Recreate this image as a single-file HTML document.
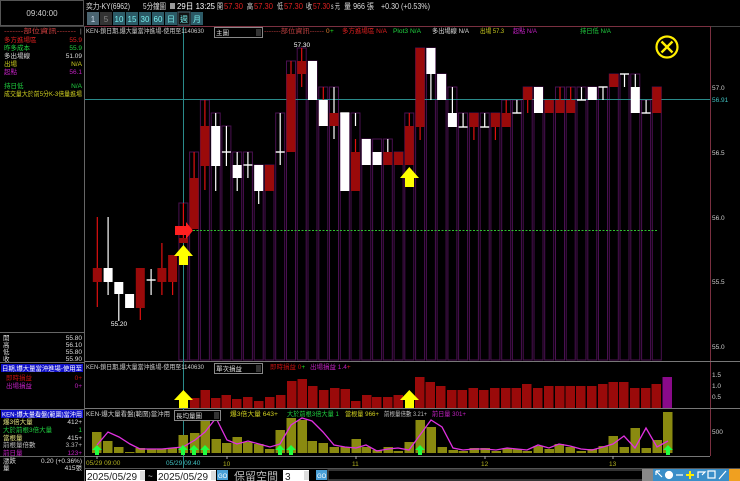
<!DOCTYPE html>
<html><head><meta charset="utf-8"><style>
html,body{margin:0;padding:0;background:#000;width:740px;height:481px;overflow:hidden}
svg{display:block}
text{font-family:"Liberation Sans","Noto Sans CJK TC",sans-serif}
.s{font-size:6.5px}
.m{font-size:8px}
</style></head><body>
<svg width="740" height="481" viewBox="0 0 740 481" xmlns="http://www.w3.org/2000/svg">
<rect width="740" height="481" fill="#000"/>
<rect x="0.5" y="0.5" width="83" height="25" fill="#000" stroke="#555"/>
<text x="42" y="16" class="m" fill="#ccc" text-anchor="middle">09:40:00</text>
<g class="m" lengthAdjust="spacingAndGlyphs">
<text x="86" y="9" fill="#ddd" textLength="44" lengthAdjust="spacingAndGlyphs">奕力-KY(6962)</text>
<text x="143" y="9" fill="#ddd" textLength="23" lengthAdjust="spacingAndGlyphs">5分鐘圖</text>
<rect x="170" y="3" width="5" height="6" fill="#999"/>
<text x="177" y="9" fill="#fff" textLength="38" lengthAdjust="spacingAndGlyphs">29日 13:25</text>
<text x="217" y="9" fill="#ddd" textLength="6" lengthAdjust="spacingAndGlyphs">開</text><text x="224" y="9" fill="#e02020" textLength="19" lengthAdjust="spacingAndGlyphs">57.30</text>
<text x="247" y="9" fill="#ddd" textLength="6" lengthAdjust="spacingAndGlyphs">高</text><text x="254" y="9" fill="#e02020" textLength="19" lengthAdjust="spacingAndGlyphs">57.30</text>
<text x="277" y="9" fill="#ddd" textLength="6" lengthAdjust="spacingAndGlyphs">低</text><text x="284" y="9" fill="#e02020" textLength="19" lengthAdjust="spacingAndGlyphs">57.30</text>
<text x="306" y="9" fill="#ddd" textLength="6" lengthAdjust="spacingAndGlyphs">收</text><text x="313" y="9" fill="#e02020" textLength="17" lengthAdjust="spacingAndGlyphs">57.30</text>
<text x="331" y="9" fill="#ddd" textLength="9" lengthAdjust="spacingAndGlyphs">s 元</text>
<text x="344" y="9" fill="#ddd" textLength="30" lengthAdjust="spacingAndGlyphs">量 966 張</text>
<text x="381" y="9" fill="#ddd" textLength="49" lengthAdjust="spacingAndGlyphs">+0.30 (+0.53%)</text>
</g>
<g class="m" text-anchor="middle">
<rect x="87" y="12" width="12" height="13" fill="#4a6470"/><text x="93" y="22" fill="#cde">1</text>
<rect x="100" y="12" width="12" height="13" fill="#333"/><text x="106" y="22" fill="#888">5</text>
<rect x="113" y="12" width="12" height="13" fill="#2c5a66"/><text x="119" y="22" fill="#7ee">10</text>
<rect x="126" y="12" width="12" height="13" fill="#2c5a66"/><text x="132" y="22" fill="#7ee">15</text>
<rect x="139" y="12" width="12" height="13" fill="#2c5a66"/><text x="145" y="22" fill="#7ee">30</text>
<rect x="152" y="12" width="12" height="13" fill="#2c5a66"/><text x="158" y="22" fill="#7ee">60</text>
<rect x="165" y="12" width="12" height="13" fill="#2c5a66"/><text x="171" y="22" fill="#7ee">日</text>
<rect x="178" y="12" width="12" height="13" fill="#111" stroke="#4a6470"/><text x="184" y="22" fill="#7ee">週</text>
<rect x="191" y="12" width="12" height="13" fill="#2c5a66"/><text x="197" y="22" fill="#7ee">月</text>
</g>
<line x1="84.5" y1="26" x2="84.5" y2="481" stroke="#666"/>
<line x1="0" y1="26.5" x2="740" y2="26.5" stroke="#444"/>
<g class="s">
<text x="4" y="33" fill="#d04040" textLength="72" lengthAdjust="spacingAndGlyphs">-------部位資訊-------</text><text x="80" y="33" fill="#aaa">|</text>
<text x="4" y="42" fill="#e02020">多方進場區</text><text x="82" y="42" fill="#e02020" text-anchor="end">55.9</text>
<text x="4" y="50" fill="#20d040">昨多成本</text><text x="82" y="50" fill="#20d040" text-anchor="end">55.9</text>
<text x="4" y="58" fill="#ddd">多出場線</text><text x="82" y="58" fill="#ddd" text-anchor="end">51.09</text>
<text x="4" y="66" fill="#d0d020">出場</text><text x="82" y="66" fill="#d0d020" text-anchor="end">N/A</text>
<text x="4" y="74" fill="#c020c0">起點</text><text x="82" y="74" fill="#c020c0" text-anchor="end">56.1</text>
<text x="4" y="88" fill="#20d040">持日低</text><text x="82" y="88" fill="#20d040" text-anchor="end">N/A</text>
<text x="4" y="96" fill="#d0d020" textLength="78" lengthAdjust="spacingAndGlyphs">成交量大於前5分K-3倍量進場</text>
</g>
<line x1="0" y1="332.5" x2="84" y2="332.5" stroke="#666"/>
<g class="s" fill="#ddd">
<text x="3" y="340">開</text><text x="82" y="340" text-anchor="end">55.80</text>
<text x="3" y="347">高</text><text x="82" y="347" text-anchor="end">56.10</text>
<text x="3" y="354">低</text><text x="82" y="354" text-anchor="end">55.80</text>
<text x="3" y="361">收</text><text x="82" y="361" text-anchor="end">55.90</text>
</g>
<line x1="0" y1="362.5" x2="84" y2="362.5" stroke="#666"/>
<rect x="1" y="364" width="82" height="8" fill="#1010c8"/>
<g class="s">
<text x="2" y="370.5" fill="#fff" textLength="80" lengthAdjust="spacingAndGlyphs">日期,爆大量當沖進場-使用至</text>
<text x="6" y="380" fill="#c01010">即時損益</text><text x="82" y="380" fill="#c01010" text-anchor="end">0+</text>
<text x="6" y="388" fill="#c020c0">出場損益</text><text x="82" y="388" fill="#c020c0" text-anchor="end">0+</text>
</g>
<line x1="0" y1="409.5" x2="84" y2="409.5" stroke="#666"/>
<rect x="1" y="410" width="82" height="8" fill="#1010c8"/>
<g class="s">
<text x="2" y="416.5" fill="#fff" textLength="80" lengthAdjust="spacingAndGlyphs">KEN-爆大量看盤(範圍)當沖用</text>
<text x="3" y="424" fill="#e0e080">爆3倍大量</text><text x="82" y="424" fill="#ddd" text-anchor="end">412+</text>
<text x="3" y="432" fill="#20d040">大於前根3倍大量</text><text x="82" y="432" fill="#20d040" text-anchor="end">1</text>
<text x="3" y="440" fill="#e0e080">當根量</text><text x="82" y="440" fill="#ddd" text-anchor="end">415+</text>
<text x="3" y="447" fill="#bbb">前根量倍數</text><text x="82" y="447" fill="#bbb" text-anchor="end">3.37+</text>
<text x="3" y="455" fill="#c020c0">前日量</text><text x="82" y="455" fill="#c020c0" text-anchor="end">123+</text>
</g>
<line x1="0" y1="456.5" x2="84" y2="456.5" stroke="#666"/>
<g class="s" fill="#ddd">
<text x="3" y="463">漲跌</text><text x="82" y="463" text-anchor="end">0.20 (+0.36%)</text>
<text x="3" y="470">量</text><text x="82" y="470" text-anchor="end">415張</text>
</g>

<line x1="85" y1="26.5" x2="710" y2="26.5" stroke="#7a3040"/>
<line x1="710.5" y1="26" x2="710.5" y2="456" stroke="#7a3040"/>
<line x1="85" y1="361.5" x2="740" y2="361.5" stroke="#777"/>
<line x1="85" y1="408.5" x2="740" y2="408.5" stroke="#777"/>
<line x1="85" y1="456.5" x2="710" y2="456.5" stroke="#777"/>

<g fill="none" stroke="#4a1050" stroke-width="1">
<rect x="178.9" y="203" width="9" height="157"/><rect x="189.6" y="152" width="9" height="208"/><rect x="200.4" y="100" width="9" height="260"/><rect x="211.2" y="113" width="9" height="247"/><rect x="221.9" y="126" width="9" height="234"/><rect x="232.7" y="152" width="9" height="208"/><rect x="243.4" y="152" width="9" height="208"/><rect x="254.2" y="165" width="9" height="195"/><rect x="265" y="165" width="9" height="195"/><rect x="275.7" y="113" width="9" height="247"/><rect x="286.5" y="61" width="9" height="299"/><rect x="297.2" y="48" width="9" height="312"/><rect x="308" y="61" width="9" height="299"/><rect x="318.8" y="87" width="9" height="273"/><rect x="329.5" y="87" width="9" height="273"/><rect x="340.3" y="113" width="9" height="247"/><rect x="351" y="113" width="9" height="247"/><rect x="361.8" y="139" width="9" height="221"/><rect x="372.6" y="139" width="9" height="221"/><rect x="383.3" y="139" width="9" height="221"/><rect x="394.1" y="152" width="9" height="208"/><rect x="404.8" y="113" width="9" height="247"/><rect x="415.6" y="48" width="9" height="312"/><rect x="426.4" y="48" width="9" height="312"/><rect x="437.1" y="74" width="9" height="286"/><rect x="447.9" y="87" width="9" height="273"/><rect x="458.6" y="113" width="9" height="247"/><rect x="469.4" y="113" width="9" height="247"/><rect x="480.2" y="113" width="9" height="247"/><rect x="490.9" y="113" width="9" height="247"/><rect x="501.7" y="100" width="9" height="260"/><rect x="512.4" y="100" width="9" height="260"/><rect x="523.2" y="87" width="9" height="273"/><rect x="534" y="87" width="9" height="273"/><rect x="544.7" y="100" width="9" height="260"/><rect x="555.5" y="87" width="9" height="273"/><rect x="566.2" y="87" width="9" height="273"/><rect x="577" y="87" width="9" height="273"/><rect x="587.8" y="87" width="9" height="273"/><rect x="598.5" y="87" width="9" height="273"/><rect x="609.3" y="74" width="9" height="286"/><rect x="620" y="74" width="9" height="286"/><rect x="630.8" y="74" width="9" height="286"/><rect x="641.6" y="100" width="9" height="260"/><rect x="652.3" y="87" width="9" height="273"/>
</g>

<line x1="85" y1="99.5" x2="710" y2="99.5" stroke="#2a8a8a"/>
<line x1="183.5" y1="27" x2="183.5" y2="468" stroke="#2a8a8a"/>
<line x1="193" y1="230.5" x2="657" y2="230.5" stroke="#30c030" stroke-dasharray="2,1.5"/>

<g stroke-width="1.2">
<g stroke="#e01010">
<line x1="97.3" y1="217" x2="97.3" y2="307"/><line x1="140.3" y1="268" x2="140.3" y2="320"/><line x1="161.9" y1="243" x2="161.9" y2="295"/><line x1="172.6" y1="255" x2="172.6" y2="295"/><line x1="183.4" y1="203" x2="183.4" y2="243"/><line x1="194.1" y1="152" x2="194.1" y2="229"/><line x1="204.9" y1="100" x2="204.9" y2="190"/><line x1="291" y1="61" x2="291" y2="152"/><line x1="301.7" y1="48" x2="301.7" y2="87"/><line x1="323.3" y1="87" x2="323.3" y2="126"/><line x1="355.5" y1="139" x2="355.5" y2="191"/><line x1="398.6" y1="152" x2="398.6" y2="165"/><line x1="409.3" y1="113" x2="409.3" y2="165"/><line x1="420.1" y1="48" x2="420.1" y2="140"/><line x1="473.9" y1="113" x2="473.9" y2="140"/><line x1="495.4" y1="113" x2="495.4" y2="140"/><line x1="506.2" y1="100" x2="506.2" y2="127"/><line x1="527.7" y1="87" x2="527.7" y2="113"/><line x1="560" y1="87" x2="560" y2="113"/><line x1="570.7" y1="87" x2="570.7" y2="113"/>
</g>
<g stroke="#fff">
<line x1="108.1" y1="217" x2="108.1" y2="295"/><line x1="118.8" y1="282" x2="118.8" y2="321"/><line x1="151.1" y1="269" x2="151.1" y2="295"/><line x1="215.7" y1="113" x2="215.7" y2="191"/><line x1="226.4" y1="126" x2="226.4" y2="166"/><line x1="237.2" y1="152" x2="237.2" y2="191"/><line x1="247.9" y1="152" x2="247.9" y2="178"/><line x1="258.7" y1="165" x2="258.7" y2="204"/><line x1="280.2" y1="113" x2="280.2" y2="165"/><line x1="334" y1="87" x2="334" y2="139"/><line x1="355.5" y1="113" x2="355.5" y2="126"/><line x1="387.8" y1="139" x2="387.8" y2="165"/><line x1="430.9" y1="48" x2="430.9" y2="100"/><line x1="452.4" y1="87" x2="452.4" y2="127"/><line x1="463.1" y1="113" x2="463.1" y2="127"/><line x1="484.7" y1="113" x2="484.7" y2="127"/><line x1="516.9" y1="100" x2="516.9" y2="113"/><line x1="581.5" y1="87" x2="581.5" y2="100"/><line x1="603" y1="87" x2="603" y2="100"/><line x1="624.5" y1="74" x2="624.5" y2="87"/><line x1="635.3" y1="74" x2="635.3" y2="113"/><line x1="646.1" y1="100" x2="646.1" y2="113"/>
</g>
<g stroke="#fff" stroke-width="1.4">
<line x1="146.6" y1="280" x2="155.6" y2="280"/><line x1="221.9" y1="152" x2="230.9" y2="152"/><line x1="243.4" y1="165" x2="252.4" y2="165"/><line x1="275.7" y1="152" x2="284.7" y2="152"/><line x1="340.3" y1="113" x2="349.3" y2="113"/><line x1="458.6" y1="127" x2="467.6" y2="127"/><line x1="480.2" y1="127" x2="489.2" y2="127"/><line x1="512.4" y1="113" x2="521.4" y2="113"/><line x1="577" y1="100" x2="586" y2="100"/><line x1="598.5" y1="87" x2="607.5" y2="87"/><line x1="620" y1="74" x2="629" y2="74"/><line x1="641.6" y1="113" x2="650.6" y2="113"/>
</g>
</g>
<g fill="#9a0a0a">
<rect x="92.8" y="268" width="9" height="14"/><rect x="135.8" y="268" width="9" height="40"/><rect x="157.4" y="268" width="9" height="14"/><rect x="168.1" y="255" width="9" height="27"/><rect x="178.9" y="238" width="9" height="5"/><rect x="189.6" y="178" width="9" height="51"/><rect x="200.4" y="126" width="9" height="40"/><rect x="265" y="165" width="9" height="26"/><rect x="286.5" y="74" width="9" height="78"/><rect x="297.2" y="61" width="9" height="13"/><rect x="318.8" y="113" width="9" height="13"/><rect x="351" y="152" width="9" height="39"/><rect x="394.1" y="152" width="9" height="13"/><rect x="404.8" y="126" width="9" height="39"/><rect x="415.6" y="48" width="9" height="79"/><rect x="469.4" y="113" width="9" height="14"/><rect x="490.9" y="113" width="9" height="14"/><rect x="501.7" y="113" width="9" height="14"/><rect x="523.2" y="87" width="9" height="13"/><rect x="544.7" y="100" width="9" height="13"/><rect x="555.5" y="100" width="9" height="13"/><rect x="566.2" y="100" width="9" height="13"/><rect x="609.3" y="74" width="9" height="13"/><rect x="652.3" y="87" width="9" height="26"/>
</g>
<g fill="#fff">
<rect x="103.6" y="268" width="9" height="14"/><rect x="114.3" y="282" width="9" height="12"/><rect x="125.1" y="294" width="9" height="14"/><rect x="211.2" y="126" width="9" height="40"/><rect x="232.7" y="165" width="9" height="13"/><rect x="254.2" y="165" width="9" height="26"/><rect x="308" y="61" width="9" height="39"/><rect x="318.8" y="100" width="9" height="26"/><rect x="340.3" y="113" width="9" height="78"/><rect x="361.8" y="139" width="9" height="26"/><rect x="372.6" y="152" width="9" height="13"/><rect x="426.4" y="48" width="9" height="26"/><rect x="437.1" y="74" width="9" height="26"/><rect x="447.9" y="113" width="9" height="14"/><rect x="534" y="87" width="9" height="26"/><rect x="587.8" y="87" width="9" height="13"/><rect x="630.8" y="87" width="9" height="26"/>
</g>
<rect x="329.5" y="113" width="9" height="13" fill="#9a0a0a"/>
<rect x="383.3" y="152" width="9" height="13" fill="#9a0a0a"/>

<polygon points="175,226 186,226 186,222 193,230.5 186,239 186,235 175,235" fill="#ff2020"/>
<polygon points="183.4,245 174,256 179,256 179,265 188,265 188,256 193,256" fill="#ffff00"/>
<polygon points="409.3,167 400,178 405,178 405,187 414,187 414,178 419,178" fill="#ffff00"/>
<circle cx="667" cy="47" r="10.5" fill="none" stroke="#ffee00" stroke-width="2.2"/>
<path d="M661.5 41.5 L672.5 52.5 M672.5 41.5 L661.5 52.5" stroke="#ffee00" stroke-width="2.4"/>
<text x="302" y="47" class="s" fill="#fff" text-anchor="middle">57.30</text>
<text x="119" y="326" class="s" fill="#fff" text-anchor="middle">55.20</text>

<g class="s" fill="#ccc">
<text x="712" y="90">57.0</text>
<text x="712" y="102" fill="#40c0c0">56.91</text>
<text x="712" y="155">56.5</text>
<text x="712" y="220">56.0</text>
<text x="712" y="284">55.5</text>
<text x="712" y="349">55.0</text>
<text x="712" y="377">1.5</text>
<text x="712" y="388">1.0</text>
<text x="712" y="399">0.5</text>
<text x="712" y="434">500</text>
</g>

<g class="s">
<text x="86" y="33" fill="#ccc" textLength="118" lengthAdjust="spacingAndGlyphs">KEN-鎖日期,爆大量當沖進場-使用至1140630</text>
<rect x="214.5" y="27.5" width="48" height="10" fill="#000" stroke="#888"/>
<rect x="256" y="29" width="5" height="7" fill="#333"/>
<text x="216" y="35" fill="#ddd">主圖</text>
<text x="264" y="33" fill="#c04040" textLength="60" lengthAdjust="spacingAndGlyphs">-------部位資訊------</text>
<text x="326" y="33" fill="#e08030">0</text><text x="330" y="33" fill="#20e020">+</text>
<text x="342" y="33" fill="#e02020" textLength="45" lengthAdjust="spacingAndGlyphs">多方進場區 N/A</text>
<text x="393" y="33" fill="#20d040" textLength="28" lengthAdjust="spacingAndGlyphs">Plot3 N/A</text>
<text x="432" y="33" fill="#ddd" textLength="37" lengthAdjust="spacingAndGlyphs">多出場線 N/A</text>
<text x="480" y="33" fill="#d0d020" textLength="24" lengthAdjust="spacingAndGlyphs">出場 57.3</text>
<text x="513" y="33" fill="#c020c0" textLength="24" lengthAdjust="spacingAndGlyphs">起點 N/A</text>
<text x="580" y="33" fill="#20d040" textLength="31" lengthAdjust="spacingAndGlyphs">持日低 N/A</text>
</g>

<g class="s">
<text x="86" y="369" fill="#ccc" textLength="118" lengthAdjust="spacingAndGlyphs">KEN-鎖日期,爆大量當沖進場-使用至1140630</text>
<rect x="214.5" y="363.5" width="48" height="10" fill="#000" stroke="#888"/>
<rect x="256" y="365" width="5" height="7" fill="#333"/>
<text x="216" y="371" fill="#ddd">單次損益</text>
<text x="270" y="369" fill="#c01010">即時損益 0<tspan fill="#20e020">+</tspan></text>
<text x="310" y="369" fill="#c020c0">出場損益 1.4<tspan fill="#e02020">+</tspan></text>
</g>
<g fill="#9a0a0a">
<rect x="190" y="398" width="9.5" height="10"/><rect x="200.5" y="390" width="9.5" height="18"/><rect x="211" y="398" width="9.5" height="10"/><rect x="221.5" y="395" width="9.5" height="13"/><rect x="232" y="399" width="9.5" height="9"/><rect x="243" y="397" width="9.5" height="11"/><rect x="254" y="401" width="9.5" height="7"/><rect x="265" y="397" width="9.5" height="11"/><rect x="276" y="395" width="9.5" height="13"/><rect x="287" y="381" width="9.5" height="27"/><rect x="297.5" y="379" width="9.5" height="29"/><rect x="308" y="386" width="9.5" height="22"/><rect x="319" y="390" width="9.5" height="18"/><rect x="330" y="388" width="9.5" height="20"/><rect x="340.5" y="389" width="9.5" height="19"/><rect x="351" y="401" width="9.5" height="7"/><rect x="362" y="395" width="9.5" height="13"/><rect x="372" y="397" width="9.5" height="11"/><rect x="383" y="397" width="9.5" height="11"/><rect x="393.5" y="395" width="9.5" height="13"/><rect x="415" y="377" width="9.5" height="31"/><rect x="425.5" y="382" width="9.5" height="26"/><rect x="436" y="386" width="9.5" height="22"/><rect x="447" y="390" width="9.5" height="18"/><rect x="457.5" y="390" width="9.5" height="18"/><rect x="468.5" y="388" width="9.5" height="20"/><rect x="479" y="390" width="9.5" height="18"/><rect x="490" y="388" width="9.5" height="20"/><rect x="501" y="388" width="9.5" height="20"/><rect x="511.5" y="388" width="9.5" height="20"/><rect x="522" y="384" width="9.5" height="24"/><rect x="533" y="388" width="9.5" height="20"/><rect x="544" y="386" width="9.5" height="22"/><rect x="555" y="386" width="9.5" height="22"/><rect x="565.5" y="386" width="9.5" height="22"/><rect x="576" y="386" width="9.5" height="22"/><rect x="587" y="386" width="9.5" height="22"/><rect x="598" y="384" width="9.5" height="24"/><rect x="608.5" y="382" width="9.5" height="26"/><rect x="619" y="382" width="9.5" height="26"/><rect x="630" y="388" width="9.5" height="20"/><rect x="641" y="388" width="9.5" height="20"/><rect x="651.5" y="384" width="9.5" height="24"/>
</g>
<rect x="662.5" y="377" width="9.5" height="31" fill="#8a0a8a"/>
<polygon points="183.4,390 174,400 179,400 179,408 188,408 188,400 193,400" fill="#ffff00"/>
<polygon points="409.3,390 400,400 405,400 405,408 414,408 414,400 419,400" fill="#ffff00"/>

<g fill="#8a8a10">
<rect x="92" y="432" width="9.5" height="21"/><rect x="103" y="441" width="9.5" height="12"/><rect x="114" y="447" width="9.5" height="6"/><rect x="125" y="452" width="9.5" height="1"/><rect x="135.5" y="448" width="9.5" height="5"/><rect x="147" y="449" width="9.5" height="4"/><rect x="157" y="449" width="9.5" height="4"/><rect x="167.5" y="448" width="9.5" height="5"/><rect x="178.5" y="435" width="9.5" height="18"/><rect x="190" y="433" width="9.5" height="20"/><rect x="200.5" y="415" width="9.5" height="38"/><rect x="211.5" y="439" width="9.5" height="14"/><rect x="222" y="443" width="9.5" height="10"/><rect x="232.5" y="437" width="9.5" height="16"/><rect x="243" y="442" width="9.5" height="11"/><rect x="254" y="444" width="9.5" height="9"/><rect x="265" y="449" width="9.5" height="4"/><rect x="275.5" y="430" width="9.5" height="23"/><rect x="286.5" y="418" width="9.5" height="35"/><rect x="297.5" y="420" width="9.5" height="33"/><rect x="307.5" y="441" width="9.5" height="12"/><rect x="318.5" y="443" width="9.5" height="10"/><rect x="329.5" y="447" width="9.5" height="6"/><rect x="340.5" y="447" width="9.5" height="6"/><rect x="351.5" y="439" width="9.5" height="14"/><rect x="361.5" y="447" width="9.5" height="6"/><rect x="372.5" y="450" width="9.5" height="3"/><rect x="383.5" y="447" width="9.5" height="6"/><rect x="393.5" y="451" width="9.5" height="2"/><rect x="404.5" y="442" width="9.5" height="11"/><rect x="415.5" y="420" width="9.5" height="33"/><rect x="426.5" y="427" width="9.5" height="26"/><rect x="437.5" y="447" width="9.5" height="6"/><rect x="448.5" y="450" width="9.5" height="3"/><rect x="458.5" y="451" width="9.5" height="2"/><rect x="469.5" y="448" width="9.5" height="5"/><rect x="480.5" y="448" width="9.5" height="5"/><rect x="491.5" y="451" width="9.5" height="2"/><rect x="502.5" y="448" width="9.5" height="5"/><rect x="512.5" y="449" width="9.5" height="4"/><rect x="522.5" y="451" width="9.5" height="2"/><rect x="533.5" y="446" width="9.5" height="7"/><rect x="544.5" y="449" width="9.5" height="4"/><rect x="554.5" y="444" width="9.5" height="9"/><rect x="565.5" y="447" width="9.5" height="6"/><rect x="576.5" y="451" width="9.5" height="2"/><rect x="587.5" y="449" width="9.5" height="4"/><rect x="598.5" y="446" width="9.5" height="7"/><rect x="608.5" y="436" width="9.5" height="17"/><rect x="619.5" y="447" width="9.5" height="6"/><rect x="630.5" y="428" width="9.5" height="25"/><rect x="641.5" y="448" width="9.5" height="5"/><rect x="652.5" y="440" width="9.5" height="13"/><rect x="663" y="412" width="9.5" height="41"/>
</g>
<polyline fill="none" stroke="#e030e0" stroke-width="1.3" points="97,445 108,432 119,437 130,444 140,449 152,449 162,449 172,448 183,447 195,440 205,432 216,418 227,440 237,444 248,441 259,444 270,447 280,444 291,425 302,418 312,421 323,432 334,445 345,447 356,448 366,445 377,451 388,449 398,448 409,450 420,435 431,420 442,427 453,448 463,450 474,449 485,449 496,450 507,448 517,449 527,450 538,445 549,448 559,444 570,446 581,449 592,450 603,447 613,444 624,436 635,448 646,428 657,447 668,441"/>
<g fill="#20ff40">
<polygon points="97,445 92,450 95,450 95,455 99,455 99,450 102,450"/><polygon points="183,445 178,450 181,450 181,455 185,455 185,450 188,450"/><polygon points="194,445 189,450 192,450 192,455 196,455 196,450 199,450"/><polygon points="205,445 200,450 203,450 203,455 207,455 207,450 210,450"/><polygon points="280,445 275,450 278,450 278,455 282,455 282,450 285,450"/><polygon points="291,445 286,450 289,450 289,455 293,455 293,450 296,450"/><polygon points="420,445 415,450 418,450 418,455 422,455 422,450 425,450"/><polygon points="668,445 663,450 666,450 666,455 670,455 670,450 673,450"/>
</g>
<g class="s">
<text x="86" y="416" fill="#ccc" textLength="84" lengthAdjust="spacingAndGlyphs">KEN-爆大量看盤(範圍)當沖用</text>
<rect x="174.5" y="410.5" width="46" height="10" fill="#000" stroke="#888"/>
<rect x="214" y="412" width="5" height="7" fill="#333"/>
<text x="176" y="418" fill="#ddd">長均量圖</text>
<text x="230" y="416" fill="#d0d020" textLength="48" lengthAdjust="spacingAndGlyphs">爆3倍大量 643+</text>
<text x="287" y="416" fill="#20d040" textLength="52" lengthAdjust="spacingAndGlyphs">大於前根3倍大量 1</text>
<text x="345" y="416" fill="#d0d020" textLength="34" lengthAdjust="spacingAndGlyphs">當根量 966+</text>
<text x="384" y="416" fill="#bbb" textLength="43" lengthAdjust="spacingAndGlyphs">前根量倍數 3.21+</text>
<text x="432" y="416" fill="#c020c0" textLength="34" lengthAdjust="spacingAndGlyphs">前日量 301+</text>
</g>

<g stroke="#aaa"><line x1="97" y1="456" x2="97" y2="459"/><line x1="227" y1="456" x2="227" y2="459"/><line x1="356" y1="456" x2="356" y2="459"/><line x1="485" y1="456" x2="485" y2="459"/><line x1="613" y1="456" x2="613" y2="459"/></g>
<g class="s" fill="#b0b020">
<text x="86" y="465">05/29 09:00</text>
<text x="166" y="465" fill="#40c0c0">05/29 09:40</text>
<text x="223" y="466">10</text><text x="352" y="466">11</text><text x="481" y="466">12</text><text x="609" y="466">13</text>
</g>

<line x1="85" y1="468.5" x2="740" y2="468.5" stroke="#555"/>
<rect x="86" y="470" width="59" height="11" fill="#fff"/><rect x="140" y="471" width="5" height="9" fill="#ddd"/>
<text x="87" y="480" font-size="10" fill="#222">2025/05/29</text>
<text x="148" y="479" class="m" fill="#ddd">~</text>
<rect x="157" y="470" width="59" height="11" fill="#fff"/><rect x="211" y="471" width="5" height="9" fill="#ddd"/>
<text x="158" y="480" font-size="10" fill="#222">2025/05/29</text>
<rect x="217" y="470" width="11" height="10" fill="#4aa0d8"/><text x="218" y="478" font-size="6" fill="#fff">GO</text>
<text x="234" y="480" font-size="11" fill="#bbb">保留空間</text>
<rect x="283" y="470" width="26" height="11" fill="#fff"/><rect x="304" y="471" width="5" height="9" fill="#ddd"/>
<text x="285" y="480" font-size="10" fill="#222">3</text>
<rect x="316" y="470" width="11" height="10" fill="#4aa0d8"/><text x="317" y="478" font-size="6" fill="#fff">GO</text>
<rect x="328" y="470" width="315" height="10" fill="#000" stroke="#666"/>
<rect x="642" y="469" width="11" height="12" fill="#888"/>
<rect x="653" y="469" width="87" height="12" fill="#3a8ec8"/>
<g stroke="#fff" stroke-width="1.2" fill="none">
<path d="M656 471 L662 477 M656 471 L656 475 M656 471 L660 471"/>
<circle cx="669" cy="475" r="3.5" fill="#fff"/>
<path d="M676 475 L683 475"/>
<path d="M690 471 L690 479 M686 475 L694 475" stroke="#ffee00" stroke-width="2"/>
<path d="M698 478 L698 472 L705 472 L702 475"/>
<rect x="708" y="471" width="7" height="7"/>
<path d="M719 479 L726 471"/>
</g>
<rect x="729" y="469" width="11" height="12" fill="#f0a020"/>
</svg>
</body></html>
